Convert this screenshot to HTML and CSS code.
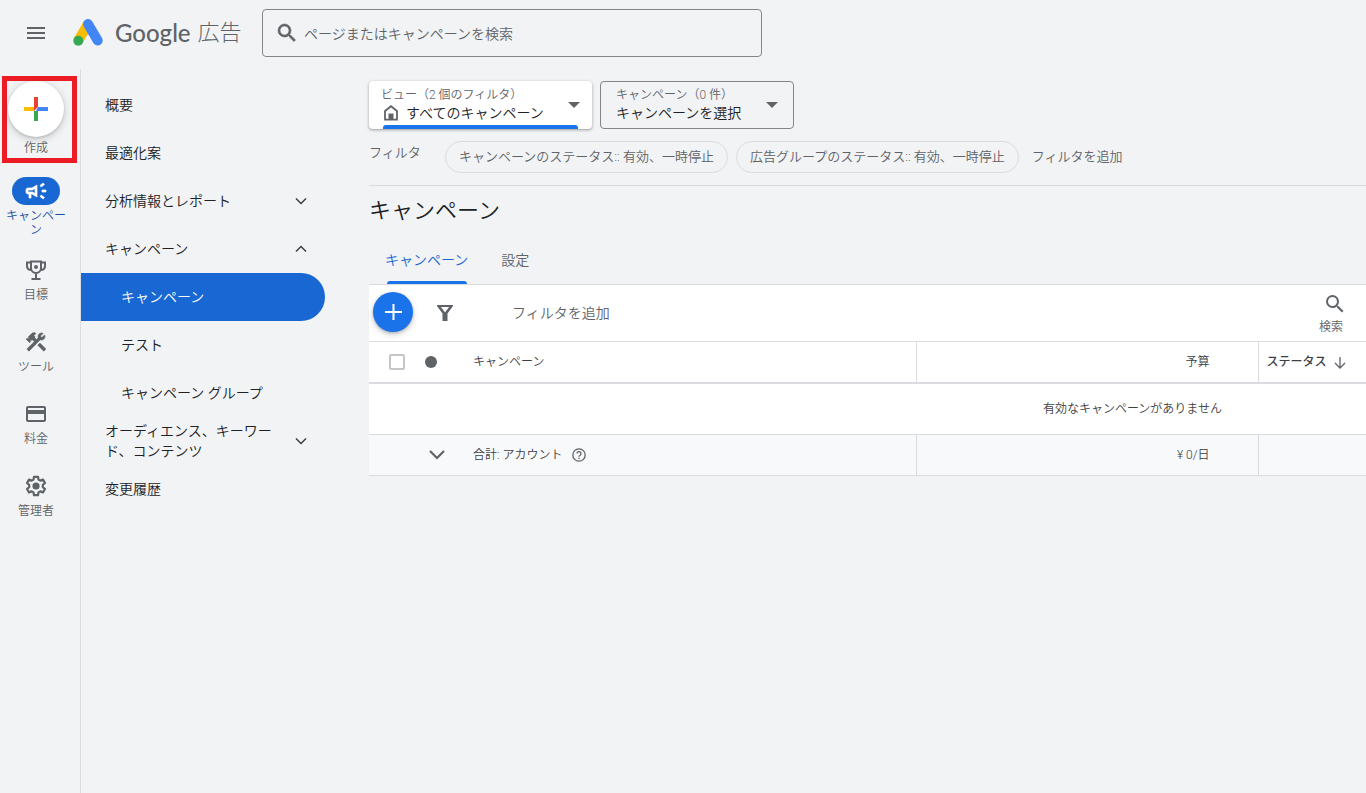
FILE: index.html
```html
<!DOCTYPE html>
<html lang="ja">
<head>
<meta charset="utf-8">
<title>キャンペーン - Google 広告</title>
<meta name="viewport" content="width=device-width, initial-scale=1">
<link rel="stylesheet" href="styles.css">
</head>
<body>
<header class="topbar">
  <button class="menu-button" type="button" aria-label="メニュー">
    <svg width="24" height="24" viewBox="0 0 24 24"><path fill="currentColor" d="M3 6h18v2H3zM3 11h18v2H3zM3 16h18v2H3z"/></svg>
  </button>
  <a class="brand" href="#">
    <svg class="brand-mark" width="32" height="30" viewBox="0 0 32 30">
      <path d="M16 6 6.300 22.500" stroke="#fbbc04" stroke-width="10" stroke-linecap="butt"/>
      <path d="M16 6l9.700 16.500" stroke="#4285f4" stroke-width="10" stroke-linecap="round"/>
      <circle cx="6.300" cy="22.700" r="5" fill="#34a853"/>
    </svg>
    <span class="brand-google">Google</span>
    <span class="brand-product">広告</span>
  </a>
  <label class="search">
    <svg width="24" height="24" viewBox="0 0 24 24"><path fill="currentColor" stroke="currentColor" stroke-width=".6" d="M15.500 14h-.79l-.28-.27A6.470 6.470 0 0 0 16 9.500 6.500 6.500 0 1 0 9.500 16c1.610 0 3.090-.59 4.230-1.570l.27.28v.79l5 4.990L20.490 19l-4.990-5zm-6 0C7.010 14 5 11.990 5 9.500S7.010 5 9.500 5 14 7.010 14 9.500 11.990 14 9.500 14z"/></svg>
    <input type="search" aria-label="検索" placeholder="ページまたはキャンペーンを検索">
  </label>
</header>

<div class="shell">
  <nav class="rail" aria-label="メイン">
    <button class="create" type="button">
      <span class="create-circle">
        <svg width="24" height="24" viewBox="0 0 24 24"><path fill="#fbbc04" d="M0 10h10v4H0z"/><path fill="#34a853" d="M10 14h4v10h-4z"/><path fill="#4285f4" d="M14 10h10v4H12z"/><path fill="#ea4335" d="M10 0h4v10l-4 4z"/></svg>
      </span>
      <span>作成</span>
    </button>
    <a class="rail-item rail-item-active" href="#">
      <span class="rail-icon"><svg width="24" height="24" viewBox="0 0 24 24"><path fill="currentColor" d="M18 11v2h4v-2h-4zM16 17.610c.96.71 2.210 1.650 3.200 2.390.4-.53.8-1.070 1.200-1.600-.99-.74-2.240-1.680-3.200-2.400-.4.54-.8 1.080-1.200 1.610zM20.400 5.600c-.4-.53-.8-1.070-1.200-1.600-.99.74-2.240 1.680-3.200 2.400.4.53.8 1.070 1.200 1.600.96-.72 2.210-1.650 3.200-2.400zM4 9c-1.100 0-2 .9-2 2v2c0 1.100.9 2 2 2h1v4h2v-4h1l5 3V6L8 9H4zm5.030 1.710L11 9.530v4.940l-1.970-1.180-.48-.29H4v-2h4.550l.48-.29z" stroke="currentColor" stroke-width=".7"/></svg></span>
      <span class="rail-label">キャンペーン</span>
    </a>
    <a class="rail-item" href="#">
      <span class="rail-icon"><svg width="24" height="24" viewBox="0 0 24 24" fill="none" stroke="currentColor" stroke-width="2"><path d="M7 3.500h10V10a5 5 0 0 1-10 0zM7 4.500H3V8c0 2.500 2 4 4.500 4M17 4.500h4V8c0 2.500-2 4-4.500 4M12 15v5.500M7.500 21h9"/><circle cx="12" cy="9" r="2" fill="currentColor" stroke="none"/></svg></span>
      <span class="rail-label">目標</span>
    </a>
    <a class="rail-item" href="#">
      <span class="rail-icon"><svg width="24" height="24" viewBox="0 0 24 24"><path fill="currentColor" stroke="currentColor" stroke-width=".6" d="m13.783 15.172 2.121-2.121 5.996 5.996-2.121 2.121zM17.500 10c1.930 0 3.500-1.570 3.500-3.500 0-.58-.16-1.120-.41-1.600l-2.700 2.700-1.490-1.490 2.700-2.700c-.48-.25-1.020-.41-1.600-.41C15.570 3 14 4.570 14 6.500c0 .41.080.8.210 1.160l-1.850 1.850-1.780-1.780.71-.71-1.410-1.410L12 3.490a3 3 0 0 0-4.240 0L4.220 7.030l1.410 1.410H2.810l-.71.71 3.540 3.540.71-.71V9.150l1.410 1.410.71-.71 1.780 1.780-7.410 7.410 2.120 2.120L16.340 9.790c.36.13.75.21 1.160.21z"/></svg></span>
      <span class="rail-label">ツール</span>
    </a>
    <a class="rail-item" href="#">
      <span class="rail-icon"><svg width="24" height="24" viewBox="0 0 24 24"><path fill="currentColor" d="M20 4H4c-1.110 0-2 .89-2 2v12c0 1.110.89 2 2 2h16c1.110 0 2-.89 2-2V6c0-1.110-.89-2-2-2zm0 14H4v-6h16v6zm0-10H4V6h16v2z"/></svg></span>
      <span class="rail-label">料金</span>
    </a>
    <a class="rail-item" href="#">
      <span class="rail-icon"><svg width="24" height="24" viewBox="0 0 24 24"><path fill="none" stroke="currentColor" stroke-width="2.200" stroke-linejoin="round" d="M10 2.800h4l.5 2.800 1.800 1 2.700-1 2 3.400-2.200 1.900v2.200l2.200 1.900-2 3.400-2.700-1-1.800 1-.5 2.800h-4l-.5-2.800-1.800-1-2.700 1-2-3.400 2.200-1.900v-2.200L3 9l2-3.400 2.700 1 1.800-1z"/><circle cx="12" cy="12" r="3.600" fill="currentColor"/></svg></span>
      <span class="rail-label">管理者</span>
    </a>
  </nav>

  <nav class="sidenav" aria-label="セクション">
    <a class="nav-item" href="#">概要</a>
    <a class="nav-item" href="#">最適化案</a>
    <button class="nav-item" type="button" aria-expanded="false"><span class="nav-text">分析情報とレポート</span>
      <svg width="12" height="12" viewBox="0 0 12 12"><path class="chevron" d="m1 3.500 5 5 5-5"/></svg></button>
    <button class="nav-item" type="button" aria-expanded="true"><span class="nav-text">キャンペーン</span>
      <svg width="12" height="12" viewBox="0 0 12 12"><path class="chevron" d="m1 8.500 5-5 5 5"/></svg></button>
    <a class="nav-item nav-sub nav-current" href="#" aria-current="page">キャンペーン</a>
    <a class="nav-item nav-sub" href="#">テスト</a>
    <a class="nav-item nav-sub" href="#">キャンペーン グループ</a>
    <button class="nav-item" type="button" aria-expanded="false"><span class="nav-text">オーディエンス、キーワード、コンテンツ</span>
      <svg width="12" height="12" viewBox="0 0 12 12"><path class="chevron" d="m1 3.500 5 5 5-5"/></svg></button>
    <a class="nav-item" href="#">変更履歴</a>
  </nav>

  <main class="content">
    <div class="scopes">
      <button class="scope scope-view" type="button" aria-haspopup="listbox">
        <span class="scope-body">
          <span class="scope-caption">ビュー（2 個のフィルタ）</span>
          <span class="scope-value"><svg width="20" height="16" viewBox="0 0 20 16"><path d="M4 14.700V6l6-4.800L16 6v8.700z" fill="none" stroke="#5f6368" stroke-width="1.800"/><path d="M7.500 8.500h5v6h-5z" fill="#5f6368"/></svg>すべてのキャンペーン</span>
        </span>
        <span class="caret"></span>
      </button>
      <button class="scope scope-campaign" type="button" aria-haspopup="listbox">
        <span class="scope-body">
          <span class="scope-caption">キャンペーン（0 件）</span>
          <span class="scope-value">キャンペーンを選択</span>
        </span>
        <span class="caret"></span>
      </button>
    </div>

    <div class="filters">
      <span class="filters-label">フィルタ</span>
      <button class="chip" type="button">キャンペーンのステータス:: 有効、一時停止</button>
      <button class="chip" type="button">広告グループのステータス:: 有効、一時停止</button>
      <button class="add-filter" type="button">フィルタを追加</button>
    </div>

    <h1 class="title">キャンペーン</h1>

    <div class="tabs" role="tablist">
      <button class="tab tab-active" type="button" role="tab" aria-selected="true">キャンペーン</button>
      <button class="tab" type="button" role="tab" aria-selected="false">設定</button>
    </div>

    <section class="panel">
      <div class="toolbar">
        <button class="fab" type="button" aria-label="新しいキャンペーン">
          <svg width="18" height="18" viewBox="0 0 18 18"><path d="M9.500 1v16M1 9h17" stroke="#fff" stroke-width="2"/></svg>
        </button>
        <button class="filter-button" type="button" aria-label="フィルタ">
          <svg width="18" height="18" viewBox="0 0 18 18"><path d="M3 2h12L9 10z" fill="none" stroke="currentColor" stroke-width="2"/><path d="M1 1h1.500L9 9.500 15.500 1H17v1l-5.500 7.500V17h-5V9.500L1 2z" fill="currentColor"/></svg>
        </button>
        <button class="toolbar-filter" type="button">フィルタを追加</button>
        <button class="toolbar-search" type="button">
          <svg width="24" height="24" viewBox="0 0 24 24"><path fill="currentColor" d="M15.500 14h-.79l-.28-.27A6.470 6.470 0 0 0 16 9.500 6.500 6.500 0 1 0 9.500 16c1.610 0 3.090-.59 4.230-1.570l.27.28v.79l5 4.990L20.490 19l-4.990-5zm-6 0C7.010 14 5 11.990 5 9.500S7.010 5 9.500 5 14 7.010 14 9.500 11.990 14 9.500 14z"/></svg>
          <span>検索</span>
        </button>
      </div>
      <table class="grid">
        <colgroup><col class="col-check"><col class="col-dot"><col><col class="col-budget"><col class="col-status"></colgroup>
        <thead>
          <tr>
            <th class="cell-check"><input class="check" type="checkbox" aria-label="すべて選択"></th>
            <th class="cell-mark"><span class="dot"></span></th>
            <th>キャンペーン</th>
            <th class="numeric">予算</th>
            <th class="sorted">ステータス<svg width="12" height="12" viewBox="0 0 12 12"><path d="M6 0v11M1 6l5 5 5-5" fill="none" stroke="#5f6368" stroke-width="1.300"/></svg></th>
          </tr>
        </thead>
        <tbody>
          <tr class="empty"><td colspan="5">有効なキャンペーンがありません</td></tr>
          <tr class="total">
            <td></td>
            <td class="cell-mark"><button class="expand" type="button" aria-label="展開"><svg width="18" height="12" viewBox="0 0 18 12"><path d="m2 2 7 7 7-7" fill="none" stroke="#5f6368" stroke-width="2.200"/></svg></button></td>
            <td><span class="total-name">合計: アカウント<svg width="14" height="14" viewBox="0 0 14 14"><circle cx="7" cy="7" r="6.200" fill="none" stroke="#5f6368" stroke-width="1.300"/><path d="M5 5.600a2 2 0 1 1 3.200 1.600C7.400 7.700 7 8 7 8.800" fill="none" stroke="#5f6368" stroke-width="1.300"/><path fill="#5f6368" d="M6.300 9.700h1.400V11H6.300z"/></svg></span></td>
            <td class="numeric">¥ 0/日</td>
            <td></td>
          </tr>
        </tbody>
      </table>
    </section>
  </main>
</div>
</body>
</html>
```
FILE: styles.css
```css
* { box-sizing: border-box; }

body {
  margin: 0;
  min-height: 100vh;
  display: flex;
  flex-direction: column;
  background: #f1f3f4;
  color: #202124;
  font: 350 14px/20px Roboto, "Noto Sans CJK JP", sans-serif;
}

button, input { font: inherit; color: inherit; }
button { margin: 0; padding: 0; border: 0; background: none; text-align: left; cursor: pointer; }
a { color: inherit; text-decoration: none; }
svg { display: block; flex: none; overflow: visible; }

/* Top bar */
.topbar { display: flex; align-items: center; height: 69px; padding: 0 24px 3px; color: #5f6368; }
.menu-button { width: 24px; height: 24px; }
.brand { display: flex; align-items: center; width: 190px; margin: 0 0 0 24px; }
.brand-google { margin-left: 11px; font: 500 24px/32px Lato, sans-serif; }
.brand-product { margin-left: 7px; font-size: 22px; line-height: 32px; font-weight: 300; }
.search {
  display: flex;
  align-items: center;
  gap: 5px;
  width: 500px;
  height: 48px;
  padding: 0 12px;
  border: 1px solid #80868b;
  border-radius: 4px;
}
.search input { flex: 1; min-width: 0; padding: 2px 0 0; border: 0; outline: 0; background: none; }
.search input::placeholder { color: #5f6368; opacity: 1; }

.shell { flex: 1; display: flex; }

/* Icon rail */
.rail {
  flex: none;
  width: 81px;
  padding: 7px 0 0 2px;
  border-right: 1px solid #dadce0;
  color: #5f6368;
  font-size: 12px;
  line-height: 14px;
}
.create {
  display: flex;
  flex-direction: column;
  align-items: center;
  gap: 4px;
  width: 75px;
  height: 87px;
  padding-right: 7px;
  border: 5px solid #ed1c24;
}
.create-circle {
  display: grid;
  place-items: center;
  flex: none;
  width: 56px;
  height: 56px;
  border-radius: 50%;
  background: #fff;
  box-shadow: 0 1px 2px rgba(60, 64, 67, .2), 0 2px 6px 1px rgba(60, 64, 67, .2);
}
.rail-item {
  display: flex;
  flex-direction: column;
  align-items: center;
  gap: 4px;
  width: 68px;
  min-height: 72px;
  padding-top: 1px;
  padding-bottom: 18px;
}
.rail-item-active { margin-top: 14px; padding-top: 0; color: #174ea6; }
.rail-icon { display: grid; place-items: center; width: 48px; height: 28px; border-radius: 14px; }
.rail-item-active .rail-icon { background: #1967d2; color: #fff; }
.rail-label { width: 62px; text-align: center; word-break: break-all; }

/* Section navigation */
.sidenav { flex: none; width: 244px; padding-top: 12px; }
.nav-item {
  display: flex;
  align-items: center;
  justify-content: space-between;
  width: 100%;
  height: 48px;
  padding: 0 18px 0 24px;
}
.nav-text { width: 178px; word-break: break-all; }
.nav-sub { padding-left: 40px; }
.nav-current { border-radius: 0 24px 24px 0; background: #1967d2; color: #fff; }
.chevron { fill: none; stroke: #3c4043; stroke-width: 1.5; }

/* Content */
.content { flex: 1; min-width: 0; padding: 12px 0 0 44px; }
.scopes { display: flex; gap: 8px; }
.scope {
  position: relative;
  display: flex;
  align-items: center;
  justify-content: space-between;
  height: 48px;
  border-radius: 4px;
}
.scope-body { display: flex; flex-direction: column; padding-bottom: 2px; }
.scope-caption { color: #5f6368; font-size: 12px; line-height: 18px; }
.scope-value { display: flex; align-items: center; gap: 5px; line-height: 18px; }
.scope-view {
  width: 223px;
  padding: 0 12px;
  background: #fff;
  box-shadow: 0 1px 2px rgba(60, 64, 67, .3), 0 1px 3px 1px rgba(60, 64, 67, .15);
}
.scope-view::after {
  content: "";
  position: absolute;
  right: 14px;
  bottom: 0;
  left: 14px;
  height: 4px;
  border-radius: 3px 3px 0 0;
  background: #1a73e8;
}
.scope-campaign { width: 194px; padding: 0 15px; border: 1px solid #80868b; }
.caret { border: 6px solid transparent; border-top-color: #5f6368; border-bottom: 0; }

.filters {
  display: flex;
  align-items: center;
  gap: 8px;
  height: 57px;
  border-bottom: 1px solid #dadce0;
  color: #5f6368;
  font-size: 13px;
}
.filters-label { width: 68px; padding-bottom: 8px; }
.chip { height: 32px; padding: 0 13px; border: 1px solid #dadce0; border-radius: 16px; white-space: nowrap; }
.add-filter { margin-left: 5px; }

.title { margin: 0; padding: 9px 0 7px; font-size: 22px; line-height: 32px; font-weight: 350; }

.tabs { display: flex; height: 50px; color: #5f6368; }
.tab { position: relative; padding: 2px 17px 0 16px; }
.tab-active { color: #1967d2; }
.tab-active::after {
  content: "";
  position: absolute;
  right: 18px;
  bottom: 0;
  left: 18px;
  height: 3px;
  border-radius: 3px 3px 0 0;
  background: #1a73e8;
}

.panel { border-top: 1px solid #dadce0; background: #fff; }
.toolbar { display: flex; align-items: center; height: 56px; padding: 0 22px 2px 4px; color: #5f6368; }
.fab {
  display: grid;
  place-items: center;
  width: 40px;
  height: 40px;
  border-radius: 50%;
  background: #1a73e8;
  box-shadow: 0 1px 3px rgba(60, 64, 67, .3), 0 3px 6px rgba(60, 64, 67, .2);
}
.filter-button { margin-left: 23px; padding-top: 2px; }
.toolbar-filter { margin-left: 58px; padding-top: 2px; }
.toolbar-search {
  display: flex;
  flex-direction: column;
  align-items: flex-start;
  gap: 4px;
  margin-left: auto;
  padding-top: 2px;
  font-size: 12px;
  line-height: 14px;
}
.toolbar-search svg { margin-left: 4px; margin-right: -3px; }

.grid { width: 100%; border-collapse: collapse; table-layout: fixed; font-size: 12px; line-height: 16px; color: #3c4043; }
.col-check { width: 48px; }
.col-dot { width: 40px; }
.col-budget { width: 342px; }
.col-status { width: 108px; }
.grid th { height: 41px; padding: 0 16px; border-top: 1px solid #dadce0; border-bottom: 2px solid #dadce0; font-weight: 350; text-align: left; }
.grid td { padding: 0 16px; border-bottom: 1px solid #dadce0; }
.grid .numeric { padding-right: 48px; border-right: 1px solid #dadce0; border-left: 1px solid #dadce0; text-align: right; }
.grid .sorted { padding: 0 8px; font-weight: 500; white-space: nowrap; }
.sorted svg { display: inline-block; margin-left: 7px; vertical-align: middle; }
.grid .cell-check { padding: 0 0 0 20px; }
.grid .cell-mark { padding: 0 0 0 8px; }
.check { appearance: none; display: block; width: 16px; height: 16px; margin: 0; border: 2px solid #c4c7c9; border-radius: 2px; background: #fff; }
.check:checked { background: #1a73e8; border-color: #1a73e8; }
.dot { display: block; width: 12px; height: 12px; border-radius: 50%; background: #5f6368; }
.empty td { height: 52px; padding-right: 144px; text-align: right; }
.total td { height: 41px; background: #f8f9fa; }
.expand { display: block; margin-left: 3px; }
.total-name { display: flex; align-items: center; gap: 10px; }
```
